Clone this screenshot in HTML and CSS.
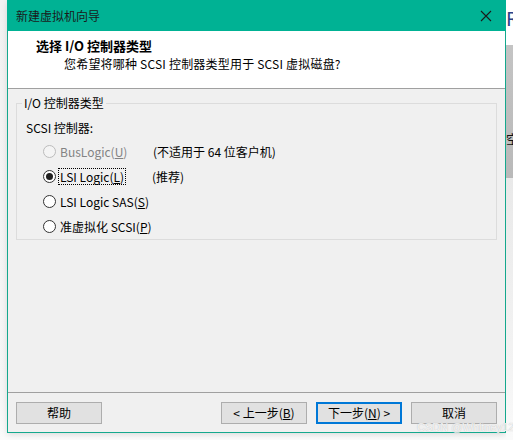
FILE: index.html
```html
<!DOCTYPE html>
<html lang="zh-CN">
<head>
    <meta charset="UTF-8">
    <title>新建虚拟机向导</title>
    <link rel="stylesheet" href="styles.css">
</head>
<body>
<div class="page">
    <div class="gap-left"></div>

    <div class="window">
        <div class="titlebar">
            <span class="title">新建虚拟机向导</span>
            <svg class="close" width="12" height="12" viewBox="0 0 12 12">
                <path d="M1 1 L11 11 M11 1 L1 11" stroke="#1b1b1b" stroke-width="1.1" fill="none"/>
            </svg>
        </div>

        <div class="header">
            <div class="heading">选择 I/O 控制器类型</div>
            <div class="subheading">您希望将哪种 SCSI 控制器类型用于 SCSI 虚拟磁盘?</div>
        </div>

        <div class="content">
            <fieldset class="group">
                <legend>I/O 控制器类型</legend>
                <div class="group-label">SCSI 控制器:</div>

                <div class="option disabled">
                    <span class="radio"></span>
                    <span class="option-text">BusLogic(<u>U</u>)</span>
                    <span class="note">(不适用于 64 位客户机)</span>
                </div>
                <div class="option">
                    <span class="radio checked"></span>
                    <span class="option-text focused">LSI Logic(<u>L</u>)</span>
                    <span class="note">(推荐)</span>
                </div>
                <div class="option">
                    <span class="radio"></span>
                    <span class="option-text">LSI Logic SAS(<u>S</u>)</span>
                </div>
                <div class="option">
                    <span class="radio"></span>
                    <span class="option-text">准虚拟化 SCSI(<u>P</u>)</span>
                </div>
            </fieldset>
        </div>

        <div class="footer">
            <button class="btn">帮助</button>
            <div class="spacer"></div>
            <button class="btn">&lt; 上一步(<u>B</u>)</button>
            <button class="btn default">下一步(<u>N</u>) &gt;</button>
            <button class="btn">取消</button>
        </div>
    </div>

    <div class="side">
        <div class="side-top">R</div>
        <div class="side-band">空</div>
        <div class="side-rest"></div>
    </div>
</div>

<div class="watermark">CSDN @Whitney1225</div>
</body>
</html>
```

FILE: styles.css
```css
html, body {
    margin: 0;
    padding: 0;
}

body {
    width: 513px;
    height: 440px;
    overflow: hidden;
    position: relative;
    background: linear-gradient(#f2f2f2, #f6f6f6 90%, #fbfbfb);
    font-family: "Noto Sans", "Noto Sans CJK SC", sans-serif;
    font-size: 12px;
    color: #000;
}

.page {
    display: flex;
    align-items: flex-start;
}

.gap-left {
    width: 7px;
    flex-shrink: 0;
}

.window {
    width: 499px;
    height: 433px;
    box-sizing: border-box;
    border: 1px solid #14a88d;
    border-top: none;
    display: flex;
    flex-direction: column;
    background: #f0f0f0;
    box-shadow: 0 2px 6px rgba(0, 0, 0, 0.12);
}

.titlebar {
    height: 31px;
    margin: 0 -1px;
    background: #00b294;
    display: flex;
    align-items: center;
    justify-content: space-between;
    padding: 0 14px 0 9px;
}

.title {
    color: #1a1a1a;
    font-family: "Noto Sans CJK SC", sans-serif;
    font-size: 12px;
    line-height: 16px;
}

.close {
    display: block;
}

.header {
    height: 57px;
    background: #fff;
    border-bottom: 1px solid #a0a0a0;
    box-sizing: content-box;
}

.heading {
    margin: 6px 0 0 28px;
    font-family: "Noto Sans CJK SC", sans-serif;
    font-weight: bold;
    font-size: 13px;
    line-height: 18px;
}

.subheading {
    margin: 0 0 0 56px;
    font-family: "Noto Sans CJK SC", sans-serif;
    font-size: 12px;
    line-height: 17px;
    letter-spacing: 0.2px;
}

.content {
    flex: 1;
    padding: 6px 8px 0 8px;
}

.group {
    margin: 0;
    padding: 5px 9px 0 9px;
    border: 1px solid #dcdcdc;
    min-width: 0;
}

.group legend {
    padding: 0 2px;
    margin-left: -4px;
    line-height: 16px;
    font-family: "Noto Sans CJK SC", sans-serif;
}

.group-label {
    height: 23px;
    line-height: 23px;
    font-family: "Noto Sans CJK SC", sans-serif;
}

.option {
    height: 25px;
    display: flex;
    align-items: center;
    padding-left: 17px;
    font-family: "Noto Sans CJK SC", sans-serif;
    white-space: nowrap;
}

.radio {
    width: 13px;
    height: 13px;
    box-sizing: border-box;
    border: 1px solid #333;
    border-radius: 50%;
    background: #fff;
    flex-shrink: 0;
    display: flex;
    align-items: center;
    justify-content: center;
}

.radio.checked::after {
    content: "";
    width: 7px;
    height: 7px;
    border-radius: 50%;
    background: #1f1f1f;
}

.option-text {
    margin-left: 2px;
    padding: 0 1px;
    line-height: 15px;
    border: 1px dotted transparent;
    min-width: 95px;
    box-sizing: border-box;
    flex-shrink: 0;
}

.option-text.focused {
    border-color: #000;
    min-width: 0;
    margin-right: 26px;
}

.disabled .radio {
    border-color: #bcbcbc;
    background: #f4f4f4;
}

.disabled .option-text {
    color: #838383;
}

.footer {
    border-top: 1px solid #a0a0a0;
    padding: 9px 8px 8px 8px;
    display: flex;
    gap: 9px;
}

.spacer {
    flex: 1;
}

.btn {
    width: 86px;
    height: 22px;
    box-sizing: border-box;
    border: 1px solid #adadad;
    background: #e1e1e1;
    font-family: "Noto Sans CJK SC", sans-serif;
    font-size: 12px;
    color: #000;
    padding: 0;
    line-height: 18px;
}

.btn.default {
    border: 2px solid #0078d7;
}

.side {
    width: 7px;
    height: 440px;
    overflow: hidden;
    display: flex;
    flex-direction: column;
}

.side-top {
    height: 45px;
    background: #fff;
    color: #2b3f86;
    font-family: "Noto Sans", sans-serif;
    font-size: 20px;
    line-height: 38px;
    white-space: nowrap;
}

.side-band {
    height: 133px;
    background: linear-gradient(#c4c4c4, #b9b9b9);
    font-family: "Noto Sans CJK SC", sans-serif;
    font-size: 13px;
    line-height: 1;
    padding-top: 87px;
    box-sizing: border-box;
    white-space: nowrap;
    color: #111;
}

.side-rest {
    flex: 1;
    background: linear-gradient(#e9e9e9, #f3f3f3 70%, #fafafa);
}

.watermark {
    position: absolute;
    left: 417px;
    top: 421px;
    font-family: "Liberation Sans", sans-serif;
    font-size: 11px;
    color: rgba(255, 255, 255, 0.85);
    text-shadow: 0 0 1px #b0b0b0;
    white-space: nowrap;
}
```
